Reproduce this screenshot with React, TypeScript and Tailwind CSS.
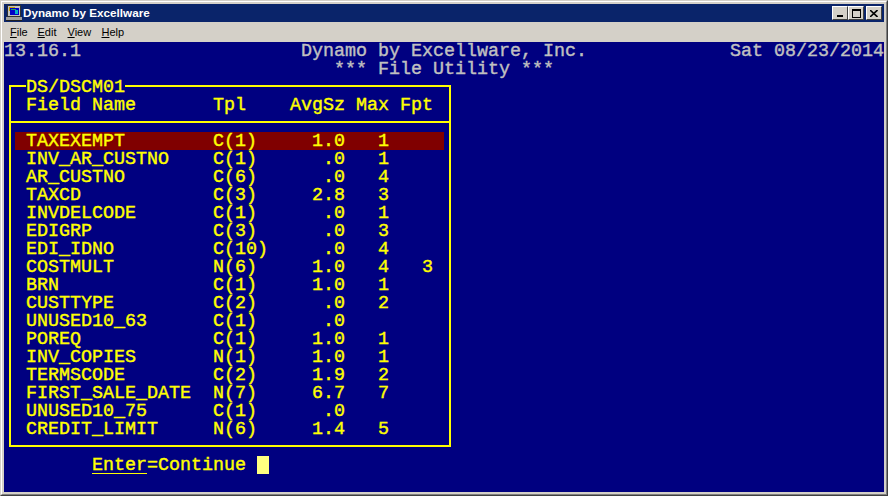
const rows: [string, string, string, string, string][] = [
  ["TAXEXEMPT", "C(1)", "1.0", "1", ""],
  ["INV_AR_CUSTNO", "C(1)", ".0", "1", ""],
  ["AR_CUSTNO", "C(6)", ".0", "4", ""],
  ["TAXCD", "C(3)", "2.8", "3", ""],
  ["INVDELCODE", "C(1)", ".0", "1", ""],
  ["EDIGRP", "C(3)", ".0", "3", ""],
  ["EDI_IDNO", "C(10)", ".0", "4", ""],
  ["COSTMULT", "N(6)", "1.0", "4", "3"],
  ["BRN", "C(1)", "1.0", "1", ""],
  ["CUSTTYPE", "C(2)", ".0", "2", ""],
  ["UNUSED10_63", "C(1)", ".0", "", ""],
  ["POREQ", "C(1)", "1.0", "1", ""],
  ["INV_COPIES", "N(1)", "1.0", "1", ""],
  ["TERMSCODE", "C(2)", "1.9", "2", ""],
  ["FIRST_SALE_DATE", "N(7)", "6.7", "7", ""],
  ["UNUSED10_75", "C(1)", ".0", "", ""],
  ["CREDIT_LIMIT", "N(6)", "1.4", "5", ""],
];

function FieldRow({ row, active }: { row: [string, string, string, string, string]; active?: boolean }) {
  return (
    <div className={`flex h-[18px] ${active ? "bg-[#800000]" : ""}`}>
      <span className="ml-[11px] w-[187px]">{row[0]}</span>
      <span className="w-[66px]">{row[1]}</span>
      <span className="w-[66px] text-right">{row[2]}</span>
      <span className="w-[44px] text-right">{row[3]}</span>
      <span className="w-[44px] text-right">{row[4]}</span>
    </div>
  );
}

function WinButton({ children }: { children: React.ReactNode }) {
  return (
    <div className="flex h-[14px] w-4 items-center justify-center border border-b-[#404040] border-l-white border-r-[#404040] border-t-white bg-[#d4d0c8]">
      {children}
    </div>
  );
}

export default function App() {
  return (
    <div className="h-[496px] w-[888px] overflow-hidden border border-b-[#404040] border-l-[#d4d0c8] border-r-[#404040] border-t-[#d4d0c8] [font-family:'Liberation_Sans',Arial,sans-serif]">
      <div className="flex h-full flex-col border border-b-[#808080] border-l-white border-r-[#808080] border-t-white bg-[#d4d0c8] p-[2px]">
        <div className="flex h-[18px] shrink-0 items-center bg-[#0a246a] pl-[2px] pr-[2px]">
          <svg width="16" height="16" viewBox="0 0 16 16" className="mr-[1px] shrink-0">
            <rect x="1.5" y="0.5" width="13" height="11" fill="#c0c0c0" stroke="#303030" />
            <rect x="4" y="3" width="9" height="7" fill="#0000c8" />
            <path d="M3 2h6v1H4v3H3z" fill="#c8a000" />
            <path d="M5 4h5v1H5z" fill="#20a060" />
            <rect x="9" y="5" width="3" height="4" fill="#00b0c8" />
            <rect x="0" y="12" width="16" height="3" fill="#a0a0a0" />
            <rect x="0" y="15" width="16" height="1" fill="#202020" />
          </svg>
          <span className="text-[11.7px] font-bold text-white">Dynamo by Excellware</span>
          <div className="ml-auto flex">
            <WinButton><div className="mt-[6px] h-[2px] w-[6px] bg-black" /></WinButton>
            <WinButton>
              <div className="h-[9px] w-[9px] border border-t-2 border-black" />
            </WinButton>
            <div className="ml-[2px]">
              <WinButton>
                <svg width="8" height="7" viewBox="0 0 8 7">
                  <path d="M0 0L7.5 7M7.5 0L0 7" stroke="#000" strokeWidth="1.6" fill="none" />
                </svg>
              </WinButton>
            </div>
          </div>
        </div>

        <div className="flex h-5 shrink-0 items-center pl-[6px] text-[11px] text-black">
          <span className="w-[27.5px]"><u>F</u>ile</span>
          <span className="w-[30px]"><u>E</u>dit</span>
          <span className="w-[34px]"><u>V</u>iew</span>
          <span><u>H</u>elp</span>
        </div>

        <div className="h-[450px] w-[880px] shrink-0 whitespace-pre bg-[#000080] text-[18.33px] leading-[20px] text-[#ffff00] [font-family:'Liberation_Mono',monospace] [-webkit-text-stroke:0.4px_currentColor]">
          <div className="flex h-[18px] text-[#c0c0c0]">
            <span className="w-[297px]">13.16.1</span>
            <span className="w-[429px]">Dynamo by Excellware, Inc.</span>
            <span>Sat 08/23/2014</span>
          </div>
          <div className="h-[18px] text-center text-[#c0c0c0]">*** File Utility ***</div>

          <div className="relative ml-[5px] mt-[7px] h-[362px] w-[442px] border-2 border-[#ffff00] pl-[4px] pr-[5px]">
            <span className="absolute left-[15px] top-[-9px] h-[18px] bg-[#000080]">DS/DSCM01</span>
            <div className="mt-[9px] flex h-[18px]">
              <span className="ml-[11px] w-[187px]">Field Name</span>
              <span className="w-[66px]">Tpl</span>
              <span className="w-[66px] text-right">AvgSz</span>
              <span className="w-[44px] text-right">Max</span>
              <span className="w-[44px] text-right">Fpt</span>
            </div>
            <div className="-ml-[4px] -mr-[5px] mt-[7px] h-[2px] bg-[#ffff00]" />
            <div className="mt-[9px]">
              {rows.map((row, i) => (
                <FieldRow key={row[0]} row={row} active={i === 0} />
              ))}
            </div>
          </div>

          <div className="ml-[88px] mt-[9px] flex h-[18px]">
            <span className="underline decoration-1 underline-offset-[3px]">Enter</span>
            <span>=Continue</span>
            <span className="ml-[11px] h-[18px] w-[12px] bg-[#ffff80]" />
          </div>
        </div>
      </div>
    </div>
  );
}
